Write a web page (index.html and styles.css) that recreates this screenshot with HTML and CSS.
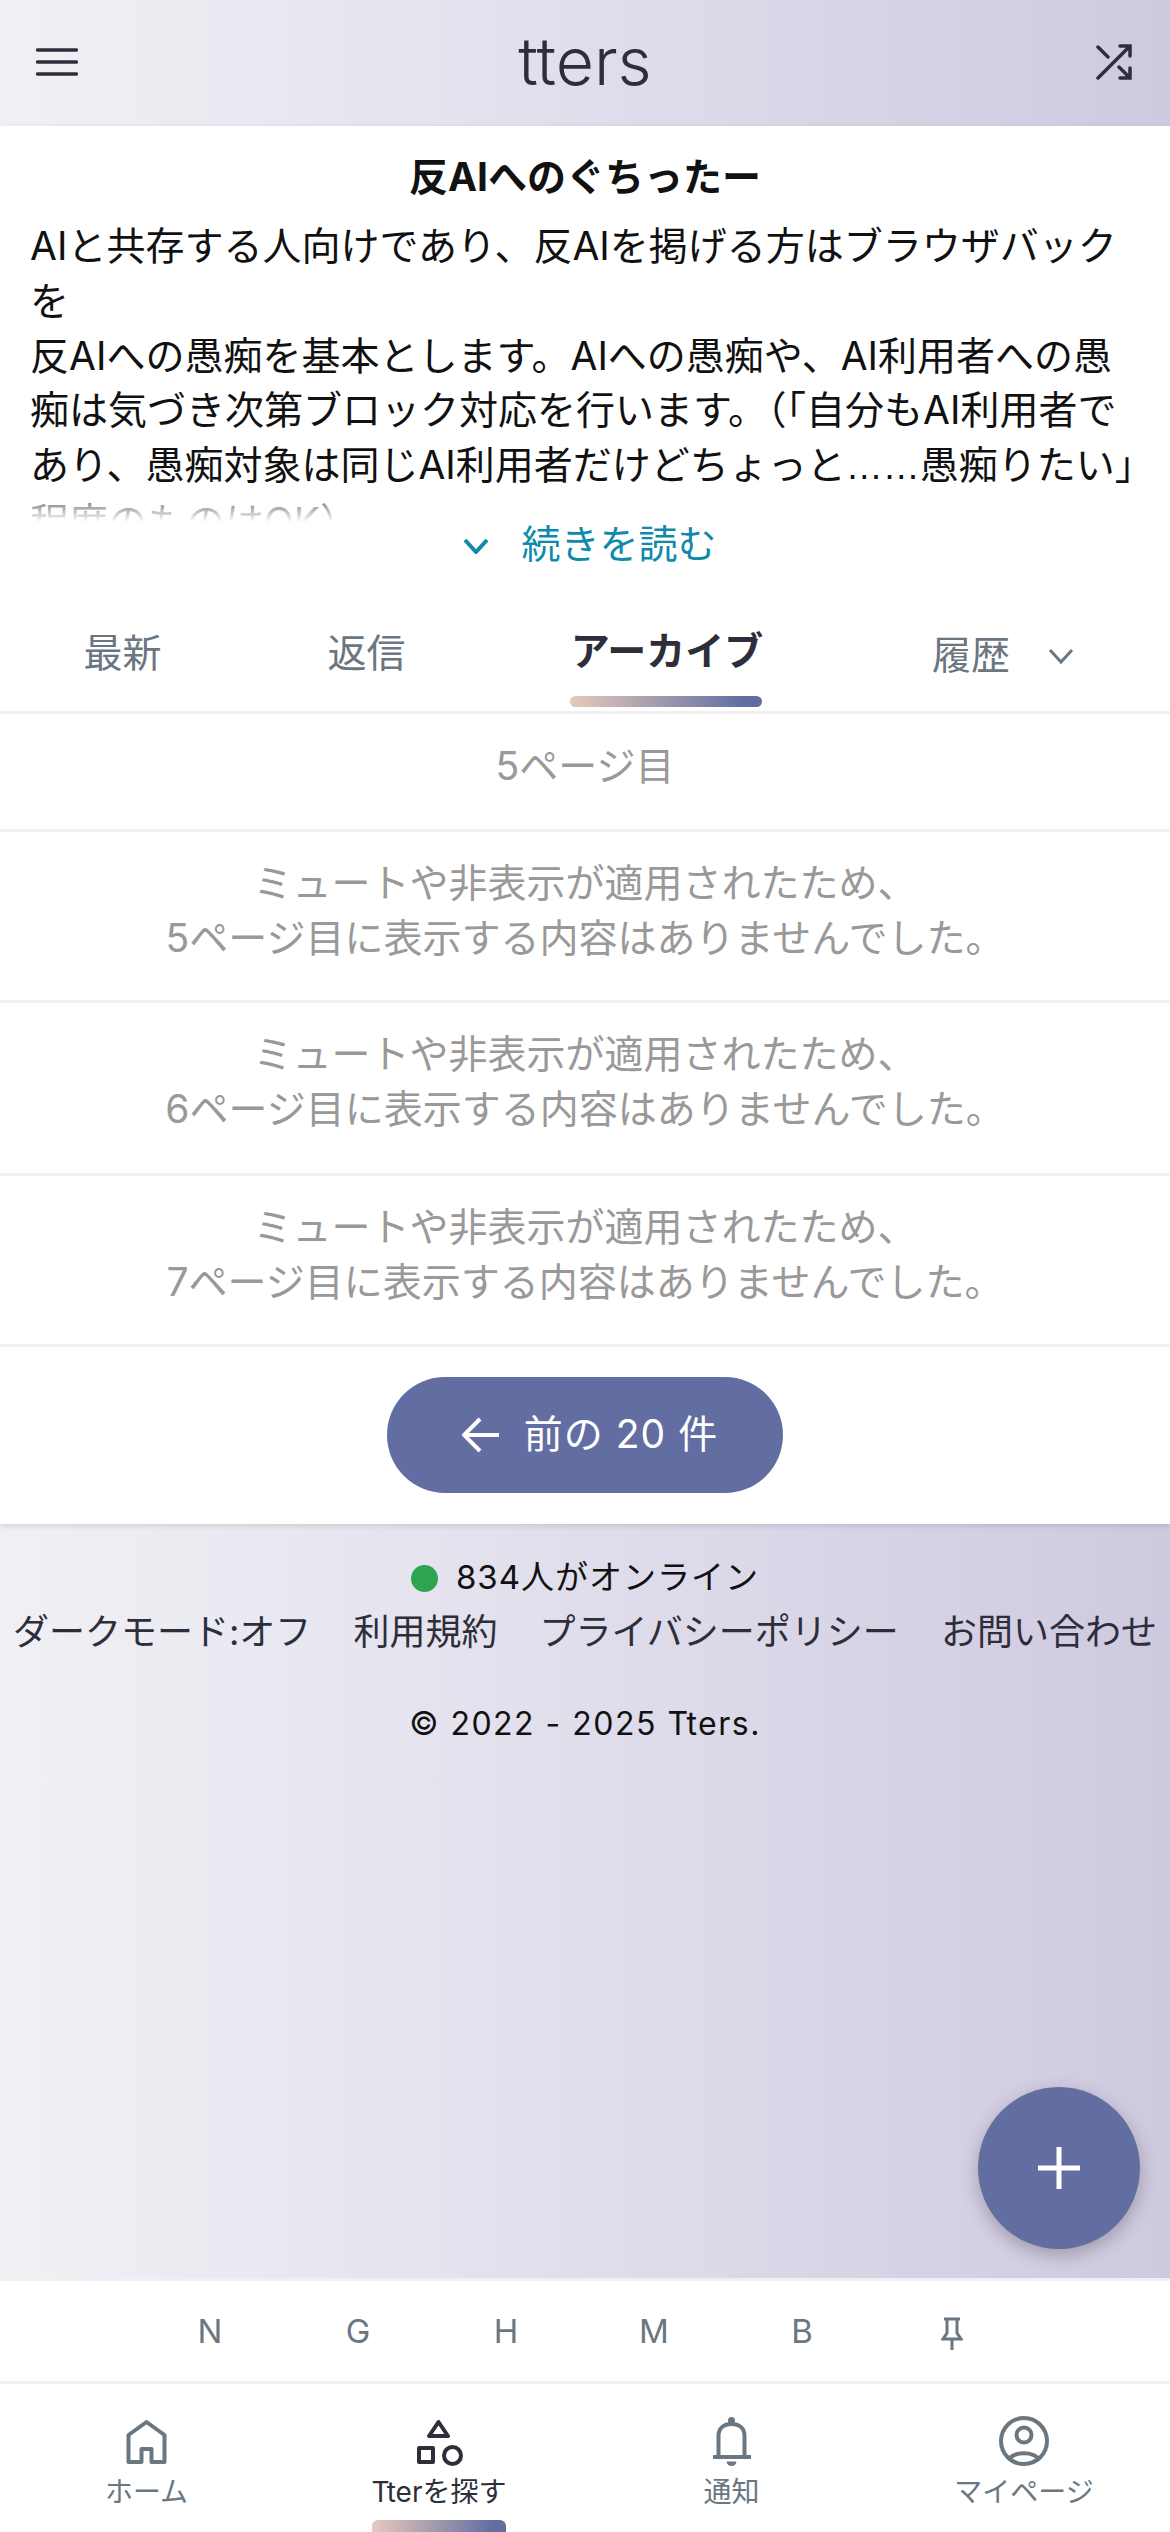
FILE: index.html
```html
<!DOCTYPE html>
<html lang="ja">
<head>
<meta charset="utf-8">
<title>tters</title>
<link rel="stylesheet" href="styles.css">
</head>
<body>
<div class="app">
  <header class="topbar">
    <svg class="ico-menu" viewBox="0 0 42 30"><path d="M1.500 3H40.500M1.500 15H40.500M1.500 27H40.500"/></svg>
    <div class="logo">tters</div>
    <svg class="ico-shuffle" viewBox="0 0 36 36"><path d="M2 34L34 2M24 2H34V12M2 3L12 13M23 23L34 34M34 24V34H24"/></svg>
  </header>

  <main class="sheet">
    <section class="intro">
      <h1 class="intro-title">反AIへのぐちったー</h1>
      <div class="intro-body">
        <p>AIと共存する人向けであり、反AIを掲げる方はブラウザバックを<br>反AIへの愚痴を基本とします。AIへの愚痴や、AI利用者への愚痴は気づき次第ブロック対応を行います。（「自分もAI利用者であり、愚痴対象は同じAI利用者だけどちょっと<span class="dots">……</span>愚痴りたい」程度のものはOK）</p>
        <div class="intro-fade"></div>
      </div>
      <div class="readmore">
        <svg class="ico-chev-blue" viewBox="0 0 26 16"><path d="M2 2L13 14L24 2"/></svg>
        <span>続きを読む</span>
      </div>
    </section>

    <nav class="tabs">
      <div class="tab">最新</div>
      <div class="tab">返信</div>
      <div class="tab tab-on">アーカイブ</div>
      <div class="tab tab-more">履歴<svg class="ico-chev-grey" viewBox="0 0 26 16"><path d="M2 2L13 14L24 2"/></svg></div>
    </nav>

    <div class="row row-page">5ページ目</div>
    <div class="row">ミュートや非表示が適用されたため、<br>5ページ目に表示する内容はありませんでした。</div>
    <div class="row row-tall">ミュートや非表示が適用されたため、<br>6ページ目に表示する内容はありませんでした。</div>
    <div class="row">ミュートや非表示が適用されたため、<br>7ページ目に表示する内容はありませんでした。</div>

    <div class="pager">
      <div class="pager-btn">
        <svg class="ico-back" viewBox="0 0 38 36"><path d="M37 18H3M18 2L2 18L18 34"/></svg>
        <span>前の 20 件</span>
      </div>
    </div>
  </main>

  <footer class="foot">
    <div class="online"><i class="dot"></i>834人がオンライン</div>
    <div class="foot-links"><span>ダークモード:オフ</span><span>利用規約</span><span>プライバシーポリシー</span><span>お問い合わせ</span></div>
    <div class="copy">© 2022 - 2025 Tters.</div>
  </footer>

  <div class="fab"><svg viewBox="0 0 44 44"><path d="M22 1V43M1 22H43"/></svg></div>

  <div class="shortcuts">
    <span>N</span><span>G</span><span>H</span><span>M</span><span>B</span>
    <svg class="ico-pin" viewBox="0 0 22 34"><path d="M3 2H19M6 2V16L2 22H20L16 16V2M11 22V33"/></svg>
  </div>

  <nav class="bottom">
    <div class="bt">
      <svg class="bt-ico" viewBox="0 0 48 50"><path d="M5.500 19L23.500 6L41.500 19V46H28.500V33H18.500V46H5.500Z"/></svg>
      <span>ホーム</span>
    </div>
    <div class="bt bt-on">
      <svg class="bt-ico" viewBox="0 0 48 50"><path d="M23.500 6L33 20H14Z"/><rect x="4" y="32" width="14" height="14"/><circle cx="37.500" cy="39.500" r="8.500"/></svg>
      <span>Tterを探す</span>
      <i class="bt-bar"></i>
    </div>
    <div class="bt">
      <svg class="bt-ico" viewBox="0 0 48 50"><path d="M10.500 41V20C10.500 12 16 8 23.500 8C31 8 36.500 12 36.500 20V41M5 41H43"/><circle class="fill" cx="23.500" cy="4.500" r="3.500"/><path class="fill" d="M18.500 45.500H28.500C28 48.500 26 50 23.500 50C21 50 19 48.500 18.500 45.500Z"/></svg>
      <span>通知</span>
    </div>
    <div class="bt">
      <svg class="bt-ico" viewBox="0 0 48 50"><circle cx="24" cy="25" r="23"/><circle cx="24" cy="19" r="7.500"/><path d="M8 44C15 35 33 35 40 44"/></svg>
      <span>マイページ</span>
    </div>
  </nav>
</div>
</body>
</html>
```
FILE: styles.css
```css
* { box-sizing: border-box; margin: 0; padding: 0; }
html, body { background: #fff; }
body { font-family: "Inter", "Noto Sans CJK JP", sans-serif; color: #2e2e3a; }
svg { fill: none; display: block; }

.app { position: relative; width: 1170px; height: 2532px; overflow: hidden; display: flex; flex-direction: column; }

.topbar {
  height: 126px; flex: none; display: flex; align-items: center; justify-content: space-between;
  padding: 0 38px 2px 36px; position: relative;
  background: linear-gradient(90deg, #f0f0f4 0%, #e8e8f1 25%, #cfc9e0 100%);
}
.ico-menu { width: 42px; height: 30px; }
.ico-menu path { stroke: #2e2e3a; stroke-width: 3.500px; stroke-linecap: round; }
.logo { position: absolute; left: 0; right: 0; text-align: center; font-family: "Inter", sans-serif; font-size: 66px; font-weight: 300; color: #2e2e3a; line-height: 126px; top: -2px; }
.ico-shuffle { width: 36px; height: 36px; }
.ico-shuffle path { stroke: #2e2e3a; stroke-width: 3.500px; stroke-linecap: round; }

.sheet { background: #fff; height: 1398px; flex: none; box-shadow: 0 2px 6px rgba(0,0,0,.12); position: relative; z-index: 1; display: flex; flex-direction: column; }

.intro { padding: 24px 30px 0; height: 474px; flex: none; }
.intro-title { font-size: 39px; font-weight: 700; line-height: 54px; text-align: center; color: #111; }
.intro-body { position: relative; height: 309px; overflow: hidden; margin: 9px -4px 0 0; padding-top: 6px; }
.intro-body p { font-size: 39px; line-height: 54.800px; color: #111; }
.dots { font-family: "Liberation Sans", sans-serif; font-size: 37px; }
.intro-fade { position: absolute; left: 0; right: 0; bottom: 0; height: 40px; background: linear-gradient(180deg, rgba(255,255,255,0), #fff 100%); }
.readmore { display: flex; align-items: center; justify-content: center; gap: 32px; color: #0f8aaa; font-size: 39px; line-height: 44px; padding-left: 10px; }
.ico-chev-blue { width: 26px; height: 16px; margin-top: 4px; }
.ico-chev-blue path { stroke: #0f8aaa; stroke-width: 4px; }

.tabs { display: grid; grid-template-columns: 245px 243px 358px 324px; height: 111px; flex: none; }
.tab { text-align: center; font-size: 39px; line-height: 50px; color: #6a7680; padding-top: 28px; position: relative; }
.tab-on { font-weight: 700; color: #2e2e3a; padding-top: 26px; }
.tab-on::after { content: ""; position: absolute; left: 82px; bottom: 4px; width: 192px; height: 11px; border-radius: 6px; background: linear-gradient(90deg, #e6c9bb, #626ea1 90%); }
.tab-more { display: flex; justify-content: center; gap: 38px; padding-top: 30px; padding-right: 10px; }
.ico-chev-grey { width: 26px; height: 16px; margin-top: 18px; }
.ico-chev-grey path { stroke: #6a7680; stroke-width: 3px; }

.row {
  border-top: 3px solid #f0f0f2; text-align: center; color: #999; font-size: 39px; line-height: 55px;
  height: 171px; padding-top: 23px; flex: none; white-space: nowrap;
}
.row-tall { height: 173px; }
.row-page { height: 118px; padding-top: 27px; line-height: 50px; }

.pager { border-top: 3px solid #f0f0f2; flex: 1; display: flex; justify-content: center; padding-top: 30px; }
.pager-btn {
  width: 396px; height: 116px; border-radius: 58px; background: #626ea1; color: #fff;
  display: flex; align-items: center; justify-content: center; gap: 24px; font-size: 39px; letter-spacing: 1px; padding-bottom: 8px; padding-left: 10px;
}
.ico-back { width: 38px; height: 36px; margin-top: 8px; }
.ico-back path { stroke: #fff; stroke-width: 4px; }

.foot {
  flex: 1; min-height: 0; text-align: center; color: #111; font-size: 32px;
  background: linear-gradient(90deg, #f0f0f4 0%, #e8e8f1 25%, #cfc9e0 100%);
  padding-top: 28px;
}
.online { display: flex; align-items: center; justify-content: center; line-height: 50px; font-size: 33px; letter-spacing: 1px; }
.dot { width: 27px; height: 27px; border-radius: 50%; background: #2ea44f; margin-right: 18px; margin-top: 3px; }
.foot-links { display: flex; justify-content: space-between; padding: 0 13px; font-size: 36px; line-height: 56px; color: #2e2e3a; margin-top: 2px; }
.copy { font-size: 32px; line-height: 50px; margin-top: 39px; letter-spacing: 1.500px; }

.fab { position: absolute; left: 978px; top: 2087px; width: 162px; height: 162px; border-radius: 50%; background: #626ea1; display: flex; align-items: center; justify-content: center; box-shadow: 0 6px 18px rgba(0,0,0,.25); z-index: 3; }
.fab svg { width: 44px; height: 44px; }
.fab path { stroke: #fff; stroke-width: 5px; }

.shortcuts { flex: none; height: 106px; background: #fff; border-top: 3px solid #f0f0f2; border-bottom: 3px solid #f0f0f2; display: flex; align-items: center; padding-left: 136px; color: #6a7680; font-size: 33px; }
.shortcuts span { width: 148px; text-align: center; }
.ico-pin { width: 22px; height: 34px; margin-left: 65px; margin-top: 6px; }
.ico-pin path { stroke: #6a7680; stroke-width: 3px; }

.bottom { flex: none; height: 148px; background: #fff; display: grid; grid-template-columns: 293px 292px 293px 292px; }
.bt { position: relative; display: flex; flex-direction: column; align-items: center; padding-top: 32px; color: #6a7680; font-size: 28px; }
.bt span { line-height: 40px; margin-top: 6px; }
.bt-ico { width: 48px; height: 50px; overflow: visible; }
.bt-ico * { stroke: #6a7680; stroke-width: 4px; stroke-linejoin: round; }
.bt-ico .fill { fill: #6a7680; stroke: none; }
.bt-on { color: #2e2e3a; }
.bt-on .bt-ico * { stroke: #2e2e3a; }
.bt-bar { position: absolute; left: 79px; bottom: 0; width: 134px; height: 12px; border-radius: 6px 6px 0 0; background: linear-gradient(90deg, #e6c9bb, #626ea1 90%); }
```
